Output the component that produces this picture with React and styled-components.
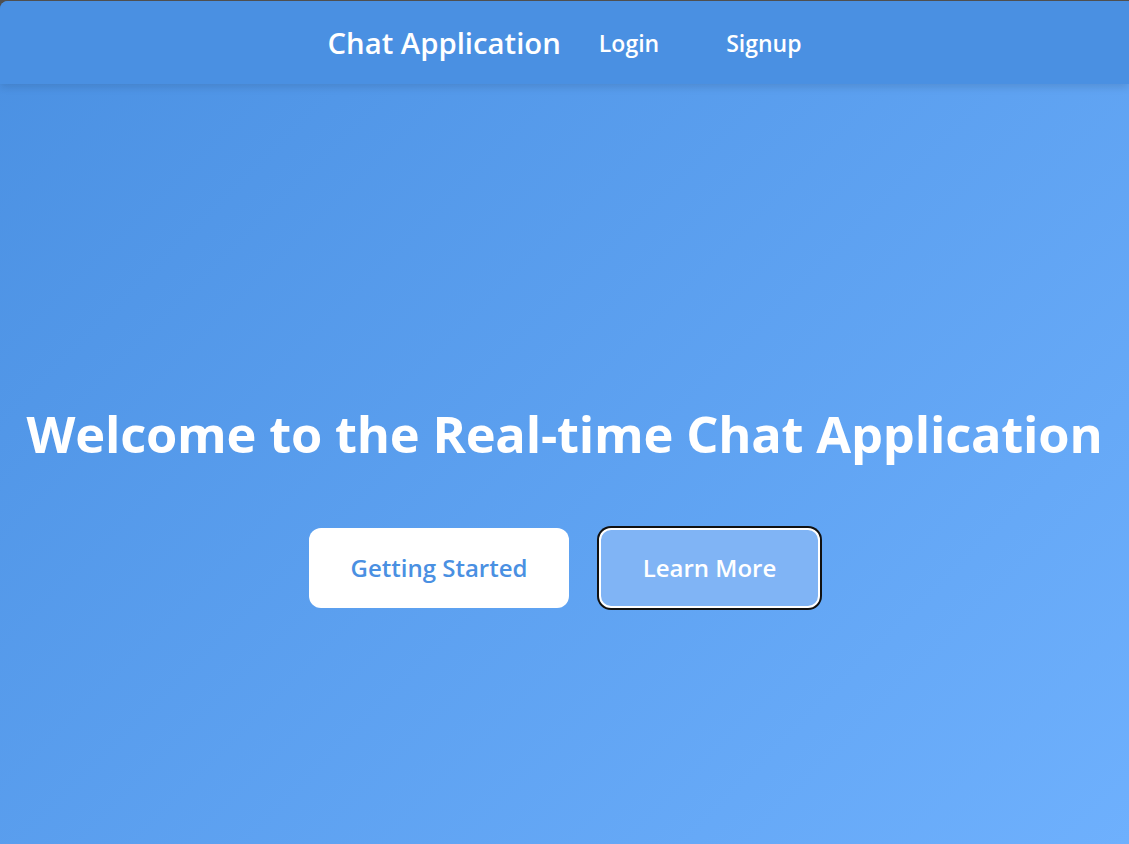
import styled, { createGlobalStyle } from "styled-components";

const GlobalStyle = createGlobalStyle`
  html, body {
    margin: 0;
    padding: 0;
    background: #4f4f4f;
  }
  body {
    font-family: "Open Sans", "Noto Sans", sans-serif;
  }
`;

const Page = styled.div`
  margin-top: 1px;
  min-height: 843px;
  display: flex;
  flex-direction: column;
  border-top-left-radius: 8px;
  overflow: hidden;
  background: linear-gradient(135deg, #4a90e2 0%, #6eb0fd 100%);
`;

const NavBar = styled.nav`
  height: 83px;
  display: flex;
  align-items: center;
  justify-content: center;
  background: #4a90e2;
  box-shadow: 0 3px 8px rgba(0, 0, 0, 0.12);
  position: relative;
  z-index: 1;
`;

const Brand = styled.div`
  color: #fff;
  font-size: 29.3px;
  font-weight: 600;
  margin-right: 38px;
`;

const NavLink = styled.a`
  color: #fff;
  font-size: 23px;
  font-weight: 600;
  text-decoration: none;
  margin-right: ${(p) => (p.last ? "0" : "67px")};
`;

const Hero = styled.main`
  flex: 1;
  display: flex;
  flex-direction: column;
  align-items: center;
  justify-content: center;
  padding-top: 78px;
`;

const Title = styled.h1`
  margin: 0 0 60px;
  color: #fff;
  font-size: 50.6px;
  font-weight: 700;
  letter-spacing: -0.2px;
  white-space: nowrap;
`;

const Actions = styled.div`
  display: flex;
  gap: 30px;
`;

const Button = styled.button`
  box-sizing: border-box;
  height: 80px;
  width: ${(p) => (p.focused ? "221px" : "260px")};
  border-radius: 12px;
  font-family: inherit;
  font-size: 24px;
  font-weight: 600;
  cursor: pointer;
  color: ${(p) => (p.primary ? "#4a90e2" : "#fff")};
  background: ${(p) => (p.primary ? "#fff" : "#80b4f5")};
  border: ${(p) => (p.focused ? "2px solid #fff" : "none")};
  box-shadow: ${(p) => (p.focused ? "0 0 0 2px #111" : "none")};
`;

export default function App() {
  return (
    <>
      <GlobalStyle />
      <Page>
        <NavBar>
          <Brand>Chat Application</Brand>
          <NavLink href="#">Login</NavLink>
          <NavLink href="#" last>
            Signup
          </NavLink>
        </NavBar>
        <Hero>
          <Title>Welcome to the Real-time Chat Application</Title>
          <Actions>
            <Button primary>Getting Started</Button>
            <Button focused>Learn More</Button>
          </Actions>
        </Hero>
      </Page>
    </>
  );
}
